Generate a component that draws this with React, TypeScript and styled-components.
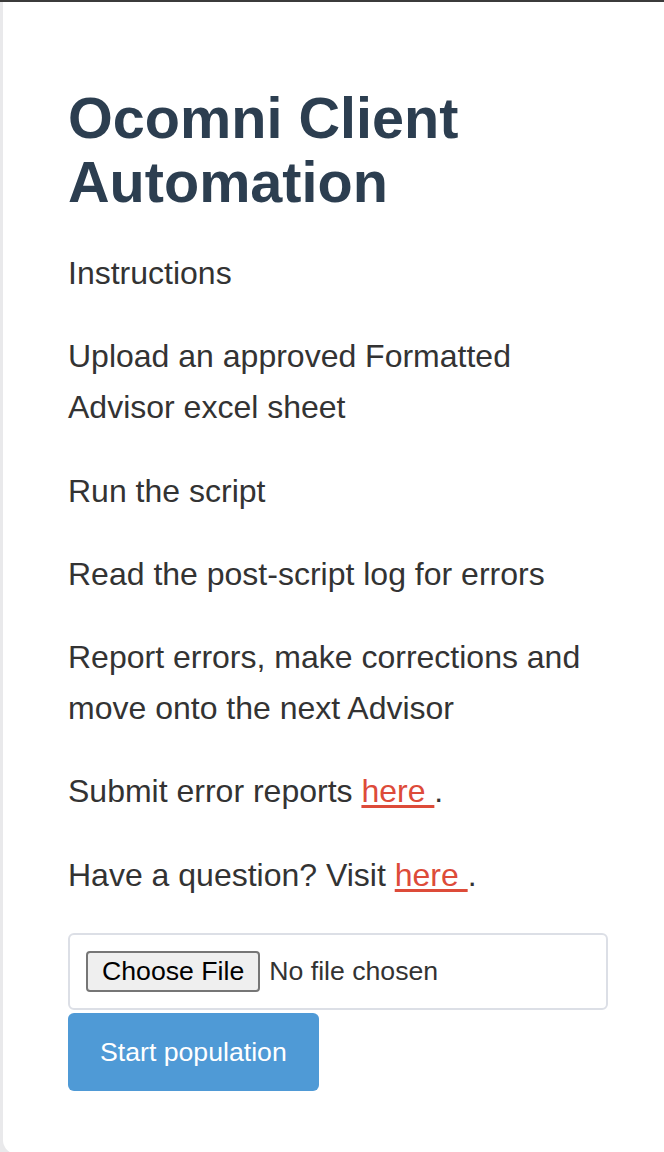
import React from "react";
import styled, { createGlobalStyle } from "styled-components";

const Global = createGlobalStyle`
  html, body {
    margin: 0;
    padding: 0;
    background: #e9e9eb;
  }
  body {
    font-family: "Liberation Sans", Arial, Helvetica, sans-serif;
  }
`;

const TopBar = styled.div`
  height: 2px;
  background: #3b3b3b;
`;

const Card = styled.main`
  margin-left: 3px;
  background: #ffffff;
  border-bottom-left-radius: 14px;
  padding: 84px 56px 63px 65px;
`;

const Title = styled.h1`
  margin: 0 0 34px;
  font-size: 57.6px;
  line-height: 64px;
  font-weight: 700;
  color: #2c3e50;
`;

const Para = styled.p`
  margin: 32px 0;
  font-size: 32px;
  line-height: 51.2px;
  color: #333333;
`;

const Link = styled.a`
  color: #dd4b39;
  text-decoration: underline;
  text-underline-offset: 3px;
`;

const FileBox = styled.div`
  border: 2px solid #dcdfe6;
  border-radius: 6px;
  padding: 16px;
  margin-top: 31px;
`;

const FileInput = styled.input`
  display: block;
  font-family: "Liberation Sans", Arial, sans-serif;
  font-size: 26.67px;
  color: #333333;

  &::file-selector-button {
    font-family: "Liberation Sans", Arial, sans-serif;
    font-size: 26.67px;
    color: #000000;
    background: #efefef;
    border: 2px solid #767676;
    border-radius: 4px;
    padding: 3px 14px;
    margin-right: 9px;
  }
`;

const StartButton = styled.button`
  display: block;
  margin-top: 3px;
  font-family: "Liberation Sans", Arial, sans-serif;
  font-size: 26.67px;
  line-height: 30px;
  color: #ffffff;
  background: #4f9ad6;
  border: none;
  border-radius: 6px;
  padding: 24px 32px;
`;

export default function App() {
  return (
    <>
      <Global />
      <TopBar />
      <Card>
        <Title>Ocomni Client Automation</Title>
        <Para>Instructions</Para>
        <Para>Upload an approved Formatted Advisor excel sheet</Para>
        <Para>Run the script</Para>
        <Para>Read the post-script log for errors</Para>
        <Para>Report errors, make corrections and move onto the next Advisor</Para>
        <Para>
          Submit error reports <Link href="#">here </Link>.
        </Para>
        <Para>
          Have a question? Visit <Link href="#">here </Link>.
        </Para>
        <FileBox>
          <FileInput type="file" />
        </FileBox>
        <StartButton>Start population</StartButton>
      </Card>
    </>
  );
}
